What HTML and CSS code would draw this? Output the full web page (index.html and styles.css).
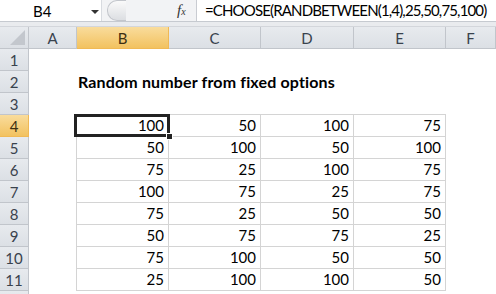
FILE: index.html
```html
<!DOCTYPE html>
<html lang="en">
<head>
    <meta charset="UTF-8">
    <title>CHOOSE with RANDBETWEEN</title>
    <link rel="stylesheet" href="styles.css">
</head>
<body>
    <div class="formula-bar">
        <div class="name-box">
            <span class="name-text">B4</span>
            <span class="name-arrow"></span>
        </div>
        <div class="fx-area">
            <span class="splitter"></span>
            <span class="fx"><i>f</i><small>x</small></span>
        </div>
        <div class="formula">=CHOOSE(RANDBETWEEN(1,4),25,50,75,100)</div>
    </div>
    <div class="band"></div>

    <div class="sheet" id="sheet">
        <div class="hdr corner"><span class="select-all"></span></div>
        <div class="hdr col">A</div>
        <div class="hdr col active">B</div>
        <div class="hdr col">C</div>
        <div class="hdr col">D</div>
        <div class="hdr col">E</div>
        <div class="hdr col">F</div>
    </div>

    <script>
        const data = [
            [100, 50, 100, 75],
            [50, 100, 50, 100],
            [75, 25, 100, 75],
            [100, 75, 25, 75],
            [75, 25, 50, 50],
            [50, 75, 75, 25],
            [75, 100, 50, 50],
            [25, 100, 100, 50]
        ];

        const sheet = document.getElementById('sheet');

        function cell(cls, text) {
            const el = document.createElement('div');
            el.className = cls;
            if (text !== undefined) el.textContent = text;
            sheet.appendChild(el);
            return el;
        }

        for (let r = 1; r <= 12; r++) {
            // row 12 only peeks in at the bottom edge, its label is out of view
            cell(r === 4 ? 'hdr row active' : 'hdr row', r < 12 ? r : '');
            const inData = r >= 4 && r <= 11;
            cell(inData ? 'blank edge-r' : 'blank');

            for (let c = 0; c < 4; c++) {
                if (inData) {
                    const el = cell('num', data[r - 4][c]);
                    if (r === 4 && c === 0) el.classList.add('current');
                } else if (r === 2 && c === 0) {
                    cell('blank title', 'Random number from fixed options');
                } else {
                    cell(r === 3 ? 'blank edge-b' : 'blank');
                }
            }
            cell('blank');
        }
    </script>
</body>
</html>
```

FILE: styles.css
```css
body {
    margin: 0;
    width: 496px;
    height: 294px;
    overflow: hidden;
    background: #fff;
    font-family: Lato, "Open Sans", sans-serif;
    color: #000;
}

/* formula bar */

.formula-bar {
    display: flex;
    height: 21px;
    background: #fff;
    border-bottom: 1px solid #c6cad0;
}

.name-box {
    width: 101px;
    display: flex;
    align-items: center;
    position: relative;
    font-size: 15px;
}

.name-text {
    margin-left: 33px;
}

.name-arrow {
    position: absolute;
    left: 91px;
    top: 10px;
    border-left: 4px solid transparent;
    border-right: 4px solid transparent;
    border-top: 4px solid #333;
}

.fx-area {
    width: 94px;
    display: flex;
    align-items: center;
    background: #f2f3f5;
    border-left: 1px solid #d8dbe0;
    border-right: 1px solid #c9ccd2;
}

.splitter {
    width: 18px;
    height: 19px;
    margin-left: 5px;
    border-radius: 10px 0 0 10px;
    background: linear-gradient(#fafafa, #dcdee2);
    border: 1px solid #c3c6cc;
    border-right: none;
}

.fx {
    margin-left: 51px;
    font-family: "Liberation Serif", serif;
    font-size: 15px;
    color: #333;
}

.fx small {
    font-size: 10px;
    font-style: italic;
}

.formula {
    flex: 1;
    padding-left: 8px;
    font-size: 15px;
    letter-spacing: -0.85px;
    line-height: 21px;
    white-space: nowrap;
    overflow: hidden;
}

.band {
    height: 4px;
    background: #e9ebee;
    border-bottom: 1px solid #d3d6db;
}

/* grid */

.sheet {
    display: grid;
    grid-template-columns: 29px 48px 92px 92px 93px 92px 1fr;
    grid-auto-rows: 22px;
}

.sheet > div {
    box-sizing: border-box;
}

.hdr {
    background: linear-gradient(#e7eaee, #dce0e5);
    color: #39424d;
    font-size: 15px;
    display: flex;
    align-items: center;
    justify-content: center;
    border-right: 1px solid #c1c5cb;
    border-bottom: 1px solid #c1c5cb;
}

.hdr.active {
    background: linear-gradient(#f9dc9c, #f2c260);
    border-right-color: #f0b955;
    border-bottom-color: #f0b955;
    color: #3d2f12;
}

.corner {
    position: relative;
}

.select-all {
    position: absolute;
    right: 3px;
    bottom: 3px;
    border-left: 15px solid transparent;
    border-bottom: 15px solid #c3c7cd;
}

.blank {
    font-size: 15px;
}

.edge-r {
    border-right: 1px solid #d4d4d4;
}

.edge-b {
    border-bottom: 1px solid #d4d4d4;
}

.title {
    font-size: 16px;
    font-weight: bold;
    white-space: nowrap;
    padding-left: 1px;
    line-height: 22px;
    letter-spacing: 0.15px;
}

.num {
    font-size: 15px;
    line-height: 21px;
    text-align: right;
    padding-right: 4px;
    border-right: 1px solid #d4d4d4;
    border-bottom: 1px solid #d4d4d4;
}

.current {
    position: relative;
}

.current::before {
    content: "";
    position: absolute;
    left: -3px;
    top: -1px;
    right: -2px;
    bottom: -1px;
    border: 3px solid #222;
}

.current::after {
    content: "";
    position: absolute;
    right: -5px;
    bottom: -4px;
    width: 5px;
    height: 5px;
    background: #222;
    border: 1px solid #fff;
}
```
